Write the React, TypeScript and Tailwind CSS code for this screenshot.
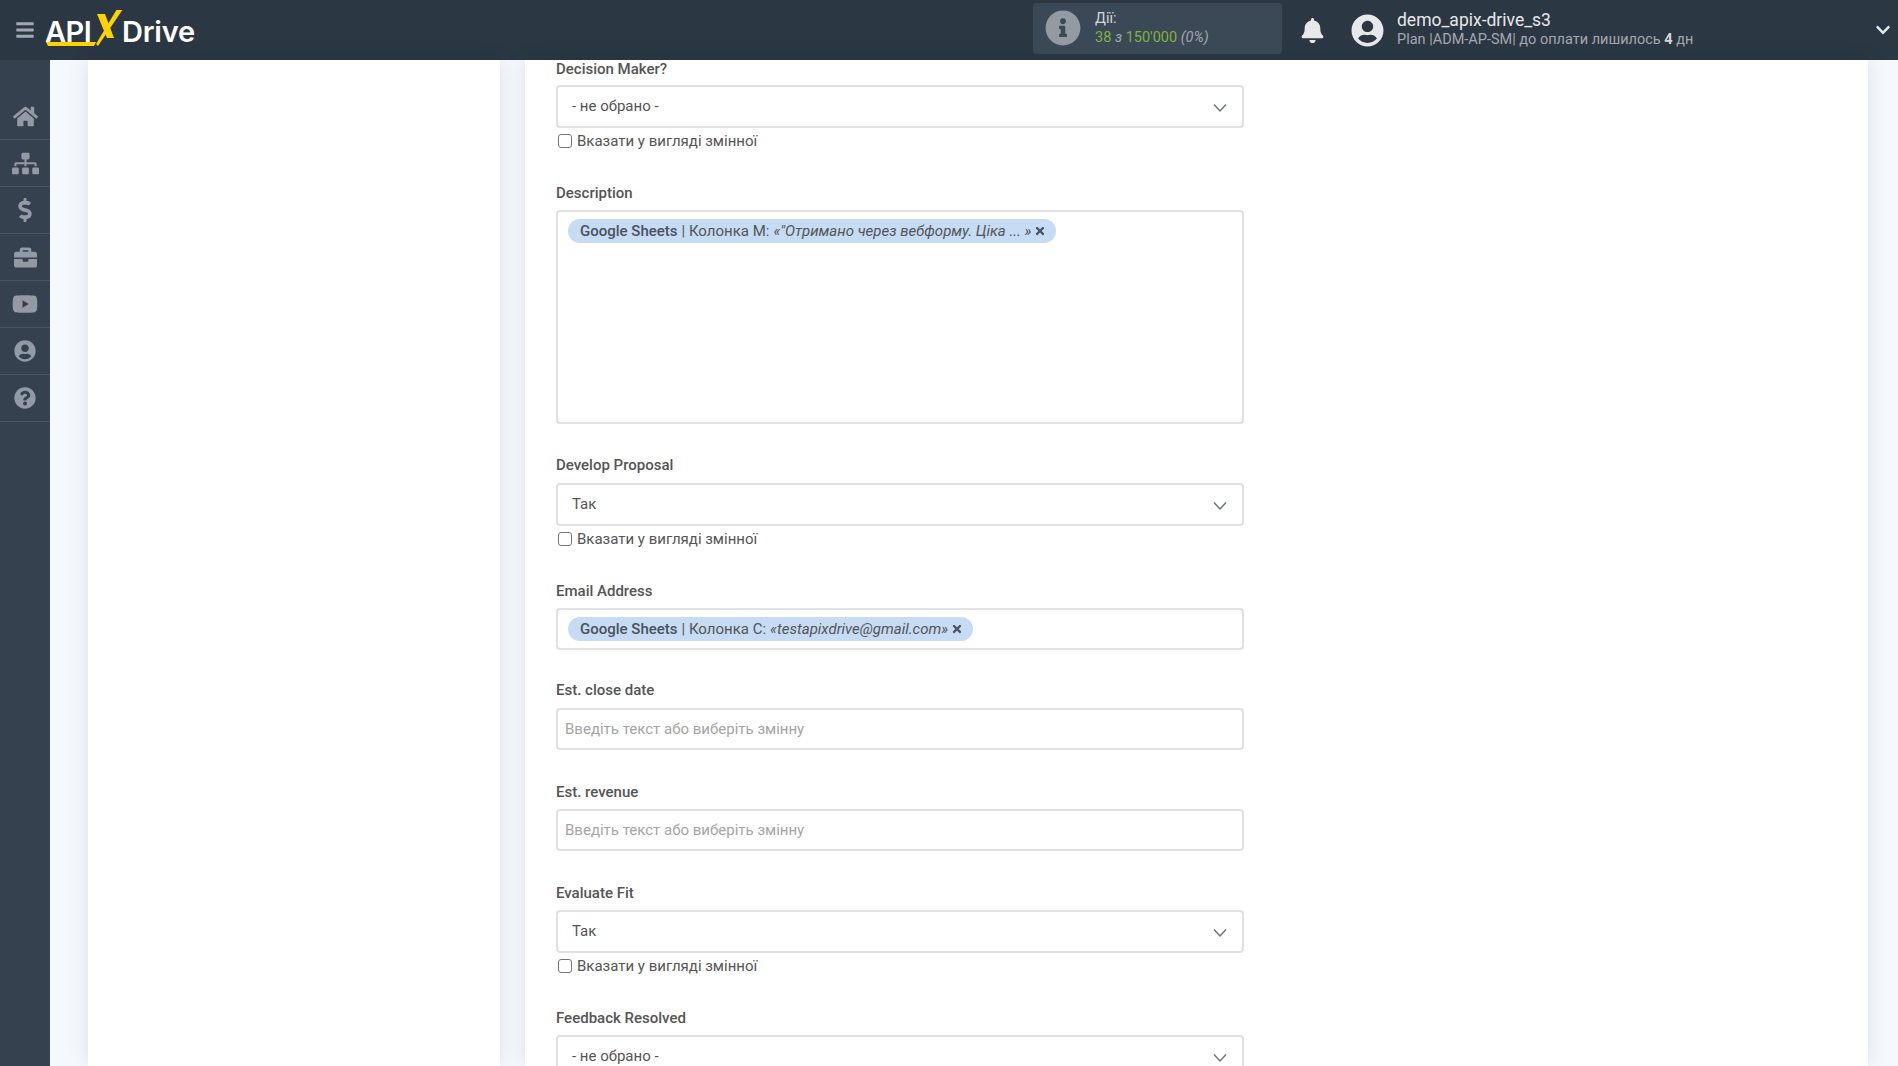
import {
  FaBars,
  FaBell,
  FaBriefcase,
  FaChevronDown,
  FaDollarSign,
  FaHome,
  FaInfoCircle,
  FaQuestionCircle,
  FaSitemap,
  FaTimes,
  FaUserCircle,
  FaYoutube,
} from "react-icons/fa";

const NAV_ICONS = [
  { icon: FaHome, size: 25 },
  { icon: FaSitemap, size: 27 },
  { icon: FaDollarSign, size: 24 },
  { icon: FaBriefcase, size: 23 },
  { icon: FaYoutube, size: 26 },
  { icon: FaUserCircle, size: 22 },
  { icon: FaQuestionCircle, size: 22 },
];

function Logo() {
  return (
    <div className="relative ml-[10px] h-[40px] w-[156px] shrink-0 font-['Inter',sans-serif] text-[29px] font-semibold leading-[40px] text-white">
      <span className="absolute left-0 top-[2px] tracking-[-0.5px]">API</span>
      <span className="absolute left-[77px] top-[2px] tracking-[-0.2px]">Drive</span>
      <svg className="absolute left-0 top-0" width="156" height="40" viewBox="0 0 156 40">
        <path d="M1 32h50l-2 4H3z" fill="#ffd200" />
        <path d="M52 4h8l9 24h-7z" fill="#ffd200" />
        <path d="M78 -1h-6L51 34l2 2z" fill="#ffd200" />
      </svg>
    </div>
  );
}

function Label({ children, className = "" }: { children: React.ReactNode; className?: string }) {
  return (
    <div className={`h-[18px] text-[15px] font-medium leading-[18px] text-[#555] ${className}`}>
      {children}
    </div>
  );
}

function SelectBox({ value, className = "" }: { value: string; className?: string }) {
  return (
    <div className={`flex h-[43px] items-center justify-between rounded border-2 border-[#e1e1e1] bg-white pl-[14px] pr-[14px] text-[15px] text-[#555] ${className}`}>
      <span className="-mt-[1px]">{value}</span>
      <svg width="16" height="10" viewBox="0 0 16 10" className="mt-[3px]" fill="none" stroke="#6b7280" strokeWidth="1.5">
        <path d="M2 1.5l6 6.5 6-6.5" />
      </svg>
    </div>
  );
}

function VarCheck() {
  return (
    <div className="mt-[3px] flex h-[20px] items-center gap-[5px] text-[15px] text-[#555]">
      <span className="ml-[2px] h-[14px] w-[14px] rounded-[3px] border border-[#767676] bg-white" />
      <span>Вказати у вигляді змінної</span>
    </div>
  );
}

function Chip({ column, value }: { column: string; value: string }) {
  return (
    <span className="inline-flex h-[24px] items-center whitespace-nowrap rounded-xl bg-[#c6dbf4] pl-[12px] pr-[10px] text-[15px] text-[#555]">
      <b className="font-medium text-[#4a5260]">Google Sheets</b>
      <span className="ml-[4px]">| {column}:</span>
      <i className="ml-[4px]">{value}</i>
      <FaTimes className="ml-[3px] text-[#4a5260]" size={12} />
    </span>
  );
}

function TextInput() {
  return (
    <div className="flex h-[42px] items-center rounded border-2 border-[#e1e1e1] bg-white pl-[7px] text-[15px] text-[#a5a5a5]">
      Введіть текст або виберіть змінну
    </div>
  );
}

export default function App() {
  return (
    <div className="flex h-[1066px] w-[1898px] flex-col overflow-hidden bg-[#f5f8fc] font-['Roboto',sans-serif]">
      <header className="flex h-[60px] shrink-0 items-center bg-[#2c3744]">
        <FaBars className="ml-[15px] text-[#a3a8ae]" size={20} />
        <Logo />
        <div className="ml-[832px] flex h-[51px] w-[249px] -translate-y-[2px] items-center rounded bg-[#3b4855] pl-[12px]">
          <FaInfoCircle className="text-[#939aa1]" size={36} />
          <div className="ml-[14px] text-[14.5px] leading-[19px]">
            <div className="text-[#d5d8db]">Дії:</div>
            <div className="text-[#7fb33f]">
              38 <i className="text-[#a3a9b0]">з</i> 150'000 <i className="text-[#a3a9b0]">(0%)</i>
            </div>
          </div>
        </div>
        <FaBell className="ml-[18px] text-[#e8e8e8]" size={25} />
        <FaUserCircle className="ml-[26px] text-[#e8e8e8]" size={33} />
        <div className="ml-[13px] flex-1 leading-[19px]">
          <div className="text-[17.5px] text-[#e8e8e8]">demo_apix-drive_s3</div>
          <div className="text-[14.5px] text-[#a3a9b0]">
            Plan |ADM-AP-SM| до оплати лишилось <b className="font-bold text-[#d5d8db]">4</b> дн
          </div>
        </div>
        <FaChevronDown className="mr-[7px] text-[#e8e8e8]" size={16} />
      </header>

      <div className="flex min-h-0 flex-1">
        <nav className="w-[50px] shrink-0 bg-[#364150] pt-[33px]">
          {NAV_ICONS.map(({ icon: Icon, size }, i) => (
            <div key={i} className="flex h-[47px] items-center justify-center border-b border-[#4a5462] text-[#939aa3]">
              <Icon size={size} />
            </div>
          ))}
        </nav>

        <aside className="ml-[38px] w-[412px] shrink-0 bg-white shadow-[0_0_20px_rgba(0,0,0,0.1)]" />

        <main className="ml-[25px] w-[1343px] shrink-0 bg-white pl-[31px] shadow-[0_0_20px_rgba(0,0,0,0.1)]">
          <div className="w-[688px]">
            <Label>Decision Maker?</Label>
            <SelectBox value="- не обрано -" className="mt-[7px]" />
            <VarCheck />

            <Label className="mt-[33px]">Description</Label>
            <div className="mt-[8px] h-[214px] rounded border-2 border-[#e1e1e1] bg-white pl-[10px] pt-[7px]">
              <Chip column="Колонка M" value={'«"Отримано через вебформу. Ціка ... »'} />
            </div>

            <Label className="mt-[32px]">Develop Proposal</Label>
            <SelectBox value="Так" className="mt-[9px]" />
            <VarCheck />

            <Label className="mt-[33px]">Email Address</Label>
            <div className="mt-[8px] flex h-[42px] items-center rounded border-2 border-[#e1e1e1] bg-white pl-[10px]">
              <Chip column="Колонка C" value="«testapixdrive@gmail.com»" />
            </div>

            <Label className="mt-[31px]">Est. close date</Label>
            <div className="mt-[9px]"><TextInput /></div>

            <Label className="mt-[33px]">Est. revenue</Label>
            <div className="mt-[8px]"><TextInput /></div>

            <Label className="mt-[33px]">Evaluate Fit</Label>
            <SelectBox value="Так" className="mt-[8px]" />
            <VarCheck />

            <Label className="mt-[33px]">Feedback Resolved</Label>
            <SelectBox value="- не обрано -" className="mt-[8px]" />
          </div>
        </main>
      </div>
    </div>
  );
}
